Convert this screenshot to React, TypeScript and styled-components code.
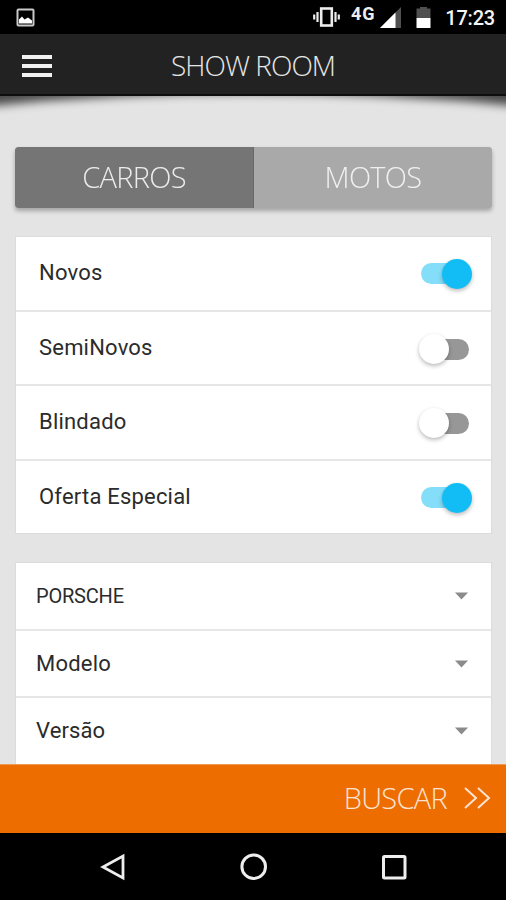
import React from "react";
import styled, { createGlobalStyle } from "styled-components";

const GlobalStyle = createGlobalStyle`
  *, *::before, *::after { box-sizing: border-box; }
  body { margin: 0; background: #000; }
`;

const Screen = styled.div`
  display: flex;
  flex-direction: column;
  width: 506px;
  height: 900px;
  overflow: hidden;
  background: #e4e4e4;
  font-family: Roboto, "Liberation Sans", sans-serif;
`;

const StatusBar = styled.div`
  display: flex;
  flex: none;
  align-items: center;
  height: 34px;
  padding: 0 11px 0 16px;
  background: #000;
`;

const StatusIcons = styled.div`
  display: flex;
  margin-left: auto;
  align-items: center;
`;

const Network = styled.span`
  height: 24px;
  margin: 0 5px 0 11px;
  color: #eee;
  font-size: 18px;
  font-weight: 700;
  line-height: 17px;
  letter-spacing: 0.8px;
`;

const Clock = styled.span`
  margin: 2px 0 0 13px;
  color: #f4f4f4;
  font-size: 20px;
  font-weight: 500;
  line-height: 24px;
  letter-spacing: -0.2px;
`;

const Header = styled.header`
  display: grid;
  flex: none;
  grid-template-columns: 100px 1fr 100px;
  align-items: center;
  height: 62px;
  border-bottom: 2px solid #0e0e0e;
  background: #222;
`;

const MenuButton = styled.button`
  display: flex;
  flex-direction: column;
  gap: 5px;
  width: 30px;
  margin: 3px 0 0 22px;
  padding: 0;
  border: 0;
  background: none;
`;

const MenuBar = styled.span`
  height: 4px;
  background: #f1f1f1;
`;

const Title = styled.h1`
  margin: 2px 0 0;
  color: #e6e6e6;
  font: 300 28px/38px "Open Sans", "Noto Sans", sans-serif;
  letter-spacing: -0.95px;
  text-align: center;
  white-space: nowrap;
`;

const Content = styled.main`
  position: relative;
  flex: 1;
  min-height: 0;
  padding: 51px 14px 0;
  overflow: hidden;
`;

const HeaderShadow = styled.svg`
  position: absolute;
  top: 0;
  left: 0;
`;

const Tabs = styled.div`
  display: grid;
  grid-template-columns: 239px 1fr;
  height: 61px;
  margin-left: 1px;
  overflow: hidden;
  border-radius: 4px;
  background: #a9a9a9;
`;

const TabsShadow = styled.div`
  border-radius: 4px;
  filter: drop-shadow(0 3px 2px rgba(0, 0, 0, 0.28));
`;

const Tab = styled.button<{ $active?: boolean }>`
  padding: 0 0 2px;
  border: 0;
  border-right: ${(p) => (p.$active ? "1px solid #686868" : "0")};
  background: ${(p) => (p.$active ? "#757575" : "#a9a9a9")};
  color: ${(p) => (p.$active ? "#ececec" : "#f0f0f0")};
  font: 300 29px/58px "Open Sans", "Noto Sans", sans-serif;
  letter-spacing: -0.7px;
`;

const Card = styled.section<{ $top: number }>`
  margin: ${(p) => p.$top}px 0 0 1px;
  width: 477px;
  border: 1px solid #dcdcdc;
  background: #fff;
`;

const Row = styled.div<{ $height: number; $inset: number; $lift?: number }>`
  display: flex;
  align-items: center;
  justify-content: space-between;
  height: ${(p) => p.$height}px;
  padding: 0 19px ${(p) => p.$lift ?? 0}px ${(p) => p.$inset}px;
  & + & { border-top: 2px solid #e6e6e6; }
`;

const Label = styled.span<{ $size?: number; $spacing?: number }>`
  color: #2b2b2b;
  font-size: ${(p) => p.$size ?? 22}px;
  line-height: 28px;
  letter-spacing: ${(p) => p.$spacing ?? 0.2}px;
`;

const Track = styled.div<{ $on: boolean }>`
  display: flex;
  align-items: center;
  justify-content: ${(p) => (p.$on ? "flex-end" : "flex-start")};
  width: 48px;
  height: 21px;
  margin: 2px 3px 0 0;
  border-radius: 11px;
  background: ${(p) => (p.$on ? "#84defa" : "#979797")};
`;

const Knob = styled.span<{ $on: boolean }>`
  flex: none;
  width: 30px;
  height: 30px;
  margin: 0 ${(p) => (p.$on ? -3 : 0)}px 0 ${(p) => (p.$on ? 0 : -2)}px;
  border-radius: 50%;
  background: ${(p) => (p.$on ? "#12bdf6" : "#fff")};
  box-shadow: 0 2px 4px rgba(0, 0, 0, 0.28);
`;

const SearchBar = styled.button`
  display: flex;
  flex: none;
  align-items: center;
  justify-content: flex-end;
  height: 69px;
  padding: 0 15px 2px 0;
  border: 0;
  border-top: 1px solid #ee9a55;
  background: #ed6d00;
  color: #fbe3d3;
  font: 300 29px/60px "Open Sans", "Noto Sans", sans-serif;
  letter-spacing: -0.7px;
`;

const SearchIcon = styled.svg`
  margin-left: 17px;
`;

const NavBar = styled.nav`
  display: flex;
  flex: none;
  align-items: center;
  justify-content: space-between;
  height: 67px;
  padding: 0 96px 0 98px;
  background: #000;
`;

const filters = [
  { name: "Novos", on: true, height: 73, lift: 2 },
  { name: "SemiNovos", on: false, height: 74, lift: 0 },
  { name: "Blindado", on: false, height: 75, lift: 1 },
  { name: "Oferta Especial", on: true, height: 74, lift: 1 },
];

const selects = [
  { name: "PORSCHE", size: 20, spacing: -0.2, height: 66, lift: 0 },
  { name: "Modelo", size: 22, spacing: 0.2, height: 67, lift: 0 },
  { name: "Versão", size: 22, spacing: 0.1, height: 68, lift: 0 },
];

export default function App() {
  return (
    <>
      <GlobalStyle />
      <Screen>
        <StatusBar>
          <svg width="19" height="19" viewBox="0 0 19 19">
            <rect x="1.5" y="1.5" width="16" height="16" rx="1" fill="none" stroke="#c9c9c9" strokeWidth="2" />
            <path d="M3 15.5V11.5L6 8.5L8.5 11.5L12 9.5L16 12.5V15.5Z" fill="#fff" />
          </svg>
          <StatusIcons>
            <svg width="27" height="20" viewBox="0 0 27 20">
              <rect x="8.2" y="1.5" width="10.6" height="17" fill="none" stroke="#ececec" strokeWidth="2.6" />
              <path d="M1.2 7.5V12.5M4.5 5V15M22.5 5V15M25.8 7.5V12.5" stroke="#ececec" strokeWidth="2.2" />
            </svg>
            <Network>4G</Network>
            <svg width="21" height="21" viewBox="0 0 21 21">
              <path d="M0 21L21 0V21Z" fill="#505050" />
              <path d="M0 21L15.5 5.5V21Z" fill="#fff" />
            </svg>
            <svg width="31" height="22" viewBox="0 0 31 22">
              <path d="M15.5 2.5H19V1H26V2.5H29.5V12H15.5Z" fill="#505050" />
              <path d="M15.5 12H29.5V22H15.5Z" fill="#fff" />
            </svg>
            <Clock>17:23</Clock>
          </StatusIcons>
        </StatusBar>
        <Header>
          <MenuButton aria-label="Menu">
            <MenuBar />
            <MenuBar />
            <MenuBar />
          </MenuButton>
          <Title>SHOW ROOM</Title>
        </Header>
        <Content>
          <HeaderShadow width="506" height="32" viewBox="0 0 506 32">
            <defs>
              <filter id="soften" x="-5%" y="-100%" width="110%" height="300%">
                <feGaussianBlur stdDeviation="5" />
              </filter>
            </defs>
            <path d="M-40 -20H546V13Q400 -3 253 -3Q106 -3 -40 13Z" fill="#000" fillOpacity="0.68" filter="url(#soften)" />
          </HeaderShadow>
          <TabsShadow>
            <Tabs>
              <Tab $active>CARROS</Tab>
              <Tab>MOTOS</Tab>
            </Tabs>
          </TabsShadow>
          <Card $top={28}>
            {filters.map((f) => (
              <Row key={f.name} $height={f.height} $inset={23} $lift={f.lift}>
                <Label>{f.name}</Label>
                <Track $on={f.on}>
                  <Knob $on={f.on} />
                </Track>
              </Row>
            ))}
          </Card>
          <Card $top={28}>
            {selects.map((s) => (
              <Row key={s.name} $height={s.height} $inset={20} $lift={s.lift}>
                <Label $size={s.size} $spacing={s.spacing}>{s.name}</Label>
                <svg width="20" height="8" viewBox="0 0 20 8">
                  <path d="M3 0.5H16L9.5 7.5Z" fill="#8b8b8b" />
                </svg>
              </Row>
            ))}
          </Card>
        </Content>
        <SearchBar>
          BUSCAR
          <SearchIcon width="27" height="24" viewBox="0 0 27 24">
            <path d="M1 2L12 12L1 22M14 2L25 12L14 22" fill="none" stroke="#fbe3d3" strokeWidth="2" />
          </SearchIcon>
        </SearchBar>
        <NavBar>
          <svg width="32" height="32" viewBox="0 0 32 32">
            <path d="M25 5V27L5 16Z" fill="none" stroke="#eee" strokeWidth="2.8" />
          </svg>
          <svg width="32" height="32" viewBox="0 0 32 32">
            <circle cx="15.7" cy="15.7" r="11.8" fill="none" stroke="#eee" strokeWidth="3" />
          </svg>
          <svg width="32" height="32" viewBox="0 0 32 32">
            <rect x="5.5" y="5.5" width="21.5" height="21.5" rx="1" fill="none" stroke="#eee" strokeWidth="3" />
          </svg>
        </NavBar>
      </Screen>
    </>
  );
}
